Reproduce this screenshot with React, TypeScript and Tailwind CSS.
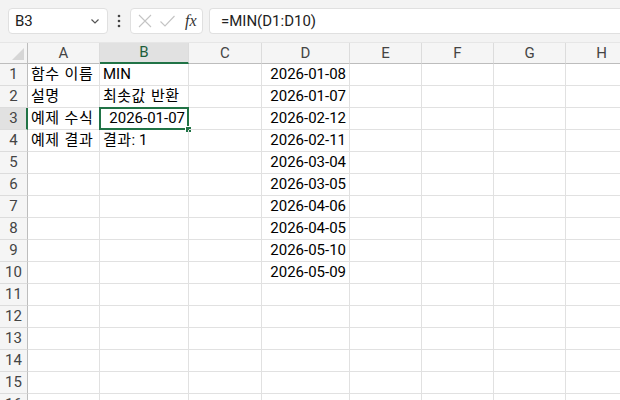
import React from "react";

const cols = [
  { k: "A", w: "w-[72px]" },
  { k: "B", w: "w-[89px]" },
  { k: "C", w: "w-[73px]" },
  { k: "D", w: "w-[88px]" },
  { k: "E", w: "w-[72px]" },
  { k: "F", w: "w-[72px]" },
  { k: "G", w: "w-[72px]" },
  { k: "H", w: "w-[72px]" },
];

const dates = [
  "2026-01-08",
  "2026-01-07",
  "2026-02-12",
  "2026-02-11",
  "2026-03-04",
  "2026-03-05",
  "2026-04-06",
  "2026-04-05",
  "2026-05-10",
  "2026-05-09",
];

const K = ({ children }: { children: React.ReactNode }) => (
  <span className="tracking-[0.5px]" style={{ fontFamily: "'Noto Sans CJK KR', sans-serif" }}>
    {children}
  </span>
);
const Sp = () => <span className="inline-block w-[5px]"> </span>;

const aVals: Record<number, React.ReactNode> = {
  1: <><K>함수</K><Sp /><K>이름</K></>,
  2: <K>설명</K>,
  3: <><K>예제</K><Sp /><K>수식</K></>,
  4: <><K>예제</K><Sp /><K>결과</K></>,
};
const bVals: Record<number, React.ReactNode> = {
  1: "MIN",
  2: <><K>최솟값</K><Sp /><K>반환</K></>,
  4: <><K>결과</K>: 1</>,
};

function Cell({ r, c }: { r: number; c: string }) {
  let content: React.ReactNode = null;
  let right = false;
  if (c === "A" && aVals[r]) content = aVals[r];
  if (c === "B" && bVals[r]) content = bVals[r];
  if (c === "B" && r === 3) {
    content = "2026-01-07";
    right = true;
  }
  if (c === "D" && r <= 10) {
    content = dates[r - 1];
    right = true;
  }
  const w = cols.find((x) => x.k === c)!.w;
  const sel = c === "B" && r === 3;
  return (
    <div
      className={`${w} h-[22px] shrink-0 border-r border-b border-[#e1e1e1] relative flex items-end pb-[1px] whitespace-nowrap overflow-visible text-[15px] leading-[20px] text-black ${
        right ? "justify-end pr-[3px]" : "pl-[3px]"
      }`}
    >
      <span className="leading-[20px]">{content}</span>
      {sel && (
        <div className="absolute left-[-1px] top-[-1px] right-[-1px] bottom-[-1px] border-2 border-[#217346] pointer-events-none">
          <div className="absolute right-[-5px] bottom-[-5px] w-[7px] h-[7px] bg-[#217346] border border-white" />
        </div>
      )}
    </div>
  );
}

export default function App() {
  const rows = Array.from({ length: 16 }, (_, i) => i + 1);
  return (
    <div
      className="w-[620px] h-[400px] overflow-hidden bg-white"
      style={{ fontFamily: "Roboto, 'Noto Sans CJK KR', sans-serif" }}
    >
      {/* formula bar */}
      <div className="h-[42px] bg-[#f3f3f3] flex items-center pl-[8px]">
        <div className="w-[100px] h-[26px] bg-white border border-[#e0e0e0] rounded-[4px] flex items-center justify-between pl-[6px] pr-[6px]">
          <span className="text-[15px] text-[#222]">B3</span>
          <svg width="12" height="12" viewBox="0 0 12 12" fill="none" stroke="#555" strokeWidth="1.2">
            <path d="M2.5 4.5 L6 8 L9.5 4.5" />
          </svg>
        </div>
        <div className="w-[22px] flex justify-center">
          <svg width="4" height="14" viewBox="0 0 4 14" fill="#444">
            <circle cx="2" cy="2" r="1.3" />
            <circle cx="2" cy="7" r="1.3" />
            <circle cx="2" cy="12" r="1.3" />
          </svg>
        </div>
        <div className="w-[73px] h-[26px] bg-white border border-[#e0e0e0] rounded-[4px] flex items-center pl-[6px] gap-[6px]">
          <svg width="16" height="16" viewBox="0 0 16 16" fill="none" stroke="#c4c4c4" strokeWidth="1.1">
            <path d="M2 2 L14 14 M14 2 L2 14" />
          </svg>
          <svg width="17" height="16" viewBox="0 0 17 16" fill="none" stroke="#c4c4c4" strokeWidth="1.1">
            <path d="M1.5 8.5 L6 13 L15.5 3" />
          </svg>
          <span
            className="text-[16px] italic text-[#333] ml-[3px]"
            style={{ fontFamily: "'Liberation Serif', serif" }}
          >
            fx
          </span>
        </div>
        <div className="ml-[6px] flex-1 h-[26px] bg-white border border-[#e0e0e0] rounded-l-[4px] border-r-0 flex items-center pl-[11px]">
          <span className="text-[15px] text-[#222]">=MIN(D1:D10)</span>
        </div>
      </div>

      {/* header row */}
      <div className="flex h-[22px] bg-[#f5f5f5] border-t border-[#e6e6e6]">
        <div className="w-[28px] h-[21px] shrink-0 border-r border-b border-[#bdbdbd] relative">
          <svg className="absolute right-[3px] bottom-[3px]" width="12" height="12" viewBox="0 0 12 12">
            <path d="M12 0 L12 12 L0 12 Z" fill="#d6d6d6" />
          </svg>
        </div>
        {cols.map((c) => {
          const sel = c.k === "B";
          return (
            <div
              key={c.k}
              className={`${c.w} h-[21px] shrink-0 border-r border-[#dcdcdc] flex items-center justify-center text-[15px] ${
                sel ? "bg-[#e1e1e1] border-b-2 border-b-[#217346] text-[#1d5e3a]" : "border-b border-b-[#bdbdbd] text-[#444]"
              }`}
            >
              {c.k}
            </div>
          );
        })}
      </div>

      {rows.map((r) => {
        const sel = r === 3;
        return (
          <div key={r} className="flex">
            <div
              className={`w-[28px] h-[22px] shrink-0 border-b border-[#dcdcdc] flex items-center justify-center text-[15px] text-[#444] ${
                sel ? "bg-[#e1e1e1] border-r-2 border-r-[#217346]" : "bg-[#f5f5f5] border-r border-r-[#bdbdbd]"
              }`}
            >
              <span className={sel ? "ml-[1px]" : ""}>{r}</span>
            </div>
            {cols.map((c) => (
              <Cell key={c.k} r={r} c={c.k} />
            ))}
          </div>
        );
      })}
    </div>
  );
}
